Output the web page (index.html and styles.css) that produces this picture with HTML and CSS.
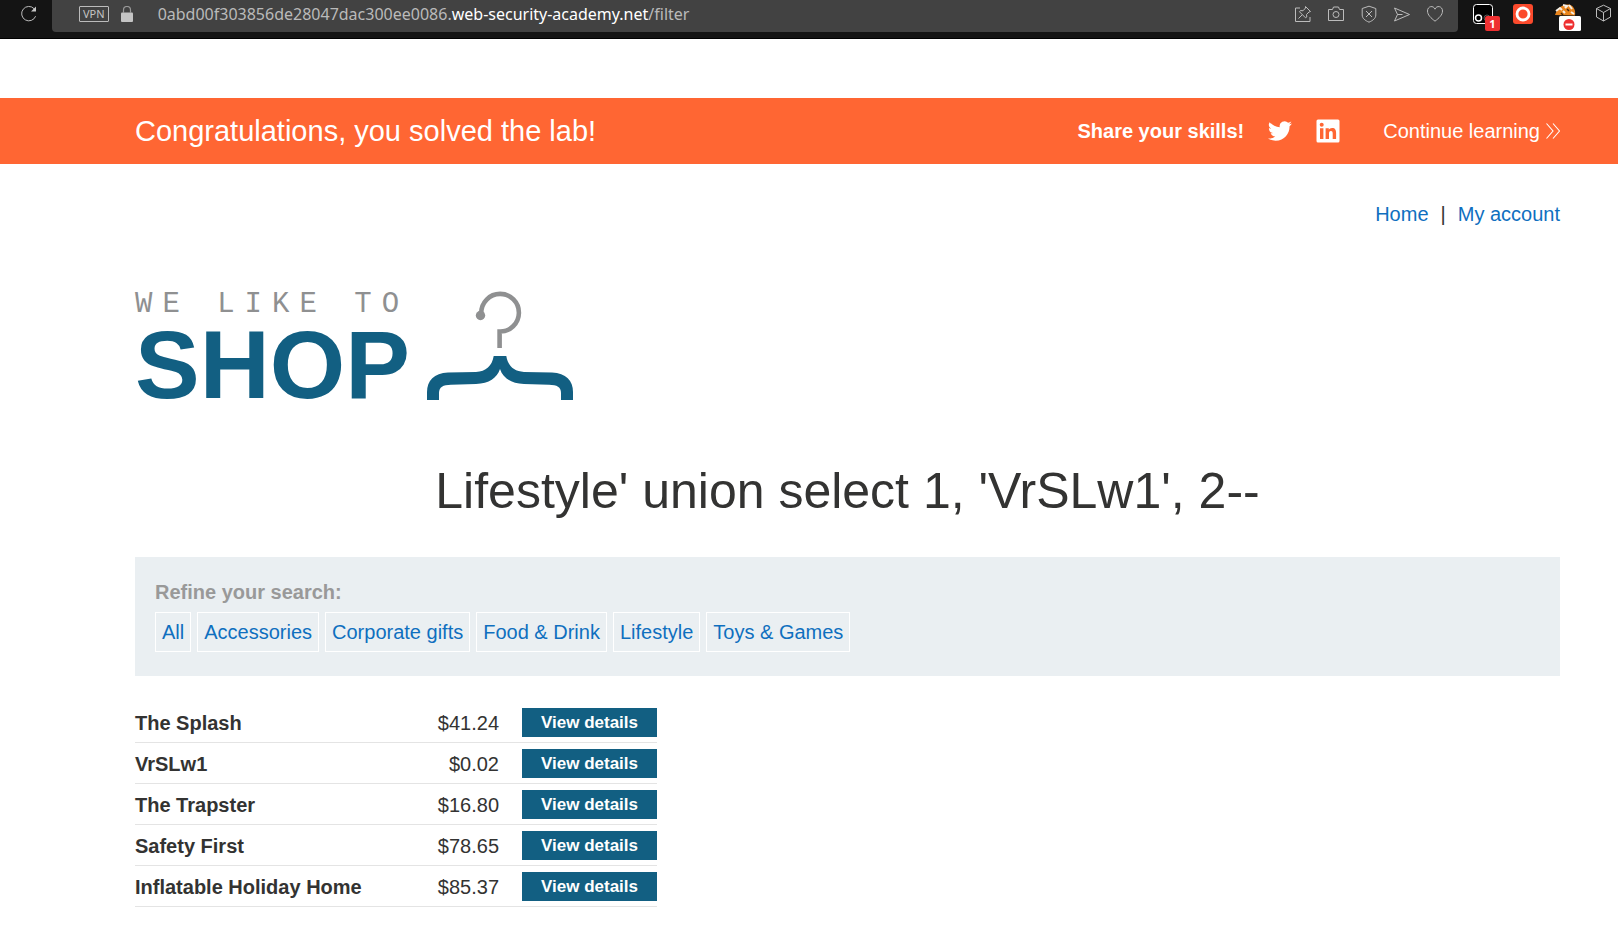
FILE: index.html
```html
<!DOCTYPE html>
<html lang="en">
<head>
<meta charset="utf-8">
<title>SQL injection lab</title>
<link rel="stylesheet" href="styles.css">
</head>
<body>
<div class="toolbar">
  <button class="tool reload" aria-label="Reload"><svg width="18" height="18" viewBox="0 0 18 18" fill="none" stroke="#c8c8c8" stroke-width="1.5"><path d="M15.6 11.2A7.2 7.2 0 1 1 14.2 3.8"/><path d="M16 1.4v5h-5z" fill="#c8c8c8" stroke="none"/></svg></button>
  <div class="address">
    <span class="vpn">VPN</span>
    <svg class="lock" width="12" height="16" viewBox="0 0 12 16"><rect y="6.500" width="12" height="9.500" rx="1" fill="#c4c4c4"/><path d="M2.500 7V4a3.500 3.500 0 0 1 7 0v3" fill="none" stroke="#999" stroke-width="1.200"/></svg>
    <span class="url">0abd00f303856de28047dac300ee0086.<span class="host">web-security-academy.net</span>/filter</span>
    <div class="actions">
      <button class="tool" aria-label="Pin"><svg width="18" height="18" viewBox="0 0 18 18"><path d="M6 3H1.500v13.500H16V12"/><path d="M11.500 1.500l5 5-1.500.5-2.500 2.500.3 2.500-1.300.8L5.500 6.800l1-1.300 2.500.3L11.500 3zM8.200 9.800L4.500 13.500"/></svg></button>
      <button class="tool" aria-label="Snapshot"><svg width="18" height="18" viewBox="0 0 18 18"><path d="M1.500 4.500h4l1-2.500h5l1 2.500h4v11h-15z"/><circle cx="9" cy="9.500" r="3"/></svg></button>
      <button class="tool" aria-label="Shield"><svg width="18" height="18" viewBox="0 0 18 18"><path d="M9 1.200L15.800 3.500V10c0 3.500-3 5.500-6.800 7.200C5.200 15.500 2.200 13.500 2.200 10V3.500zM6 6l6 6M12 6l-6 6"/></svg></button>
      <button class="tool" aria-label="Send"><svg width="18" height="18" viewBox="0 0 18 18"><path d="M1.500 3l15 6.500-15 6.500 3-6.500zM4.500 9.500h5"/></svg></button>
      <button class="tool" aria-label="Favourite"><svg width="18" height="18" viewBox="0 0 18 18"><path d="M9 16.200C5 13 1.500 10 1.500 6c0-5 6-6 7.500-1.800C10.500 0 16.500 1 16.500 6c0 4-3.500 7-7.500 10.200z"/></svg></button>
    </div>
  </div>
  <div class="extensions">
    <button class="tool" aria-label="Extension, 1 notice"><svg width="28" height="28" viewBox="0 0 28 28"><rect x="1.500" y=".5" width="19" height="19" rx="3" fill="#000" stroke="#fff"/><circle cx="6.500" cy="14" r="3" fill="none" stroke="#fff" stroke-width="1.500"/><circle cx="15" cy="14" r="3" fill="none" stroke="#555"/><rect x="13" y="12" width="15" height="15" rx="2" fill="#ee3031" stroke="none"/><text x="20.500" y="24" text-anchor="middle" class="badge">1</text></svg></button>
    <button class="tool" aria-label="Recorder"><svg width="28" height="20" viewBox="0 0 28 20"><rect width="20" height="20" rx="3" fill="#fb4a2c" stroke="none"/><circle cx="10" cy="10" r="6" fill="none" stroke="#fff" stroke-width="2.800"/></svg></button>
    <button class="tool" aria-label="Cookies"><svg width="28" height="28" viewBox="0 0 28 28"><path d="M1 11C3 4 9 0 15 .5c4 1 7 5 6 11z" fill="#e9851d" stroke="none"/><path d="M2 7l4-3 2 2M9 1l4 1-2 2M15 1l3 4M9 7l2 2M17 8l3 2" stroke="#f5efe6" stroke-width="2" fill="none"/><path d="M7 9l2 2M13 5l2 2" stroke="#4a2a10" stroke-width="1.500"/><rect x="5" y="12" width="22" height="15" rx="1.500" fill="#fff" stroke="none"/><circle cx="15" cy="20.500" r="5.500" fill="#ee3031" stroke="none"/><path d="M11.500 20.500h7" stroke="#fff" stroke-width="2"/></svg></button>
    <button class="tool" aria-label="Extensions"><svg width="18" height="18" viewBox="0 0 18 18"><path d="M8.500 1.200l7 3.300v8.500l-7 4-7-4V4.500zM1.500 4.500l7 4 7-4M8.500 8.500V17"/></svg></button>
  </div>
</div>

<section class="banner">
  <p class="banner-title">Congratulations, you solved the lab!</p>
  <span class="share">Share your skills!</span>
  <a class="social" href="#" aria-label="Twitter"><svg width="24" height="24" viewBox="0 0 24 24" fill="#fff"><path d="M23.950 4.570a10 10 0 0 1-2.820.770 4.960 4.960 0 0 0 2.160-2.720c-.950.550-2 .950-3.130 1.180a4.920 4.920 0 0 0-8.380 4.480C7.690 8.090 4.070 6.130 1.640 3.160a4.920 4.920 0 0 0 1.520 6.570 4.900 4.900 0 0 1-2.230-.610v.060a4.920 4.920 0 0 0 3.950 4.830 5 5 0 0 1-2.210.080 4.940 4.940 0 0 0 4.600 3.420A9.870 9.870 0 0 1 0 19.540a13.990 13.990 0 0 0 7.550 2.210c9.050 0 14-7.500 14-13.980 0-.210 0-.420-.020-.630a9.940 9.940 0 0 0 2.420-2.570z"/></svg></a>
  <a class="social" href="#" aria-label="LinkedIn"><svg width="24" height="24" viewBox="0 0 24 24"><rect x=".5" y=".5" width="23" height="23" rx="1.500" fill="#fff"/><path d="M4 9.300h3.400V20H4zM9.600 9.300h3.200v1.500c.6-1 1.700-1.800 3.300-1.800 3.200 0 4 2.100 4 5V20h-3.400v-5.300c0-1.400-.2-2.800-1.800-2.800s-1.900 1.300-1.900 2.700V20H9.600z" fill="#f63"/><circle cx="5.700" cy="5.800" r="2" fill="#f63"/></svg></a>
  <a class="continue" href="#">Continue learning<svg width="14" height="16" viewBox="0 0 14 16" fill="none" stroke="#fff" stroke-width="1.100"><path d="M.5.5L7 8 .5 15.500M7 .5L13.500 8 7 15.500"/></svg></a>
</section>

<main class="page">
  <nav class="account"><a href="#">Home</a><span>|</span><a href="#">My account</a></nav>
  <header class="logo">
    <div class="logo-words"><span class="tagline">WE LIKE TO</span><span class="brand">SHOP</span></div>
    <svg width="146" height="110" viewBox="427 291 146 110"><g fill="none" stroke="#8f9091" stroke-width="4.600"><path d="M481.300 314v-1A18.800 18.800 0 1 1 499.600 331.500V348"/></g><circle cx="480.500" cy="315.500" r="4.700" fill="#8f9091"/><path d="M493.700 356H506.300C508 366 514 371.500 524 372L552 372.600C566 373 573 381 573 392V400H561V393C561 387 557 384.800 549 384.700L524 384C511 383.500 503 378 500 369C497 378 489 383.500 476 384L451 384.700C443 384.800 439 387 439 393V400H427V392C427 381 434 373 448 372.600L476 372C486 371.500 492 366 493.700 356Z" fill="#125f82"/></svg>
  </header>
  <h1>Lifestyle' union select 1, 'VrSLw1', 2--</h1>
  <section class="filters">
    <p>Refine your search:</p>
    <div class="tags"><a href="#">All</a><a href="#">Accessories</a><a href="#">Corporate gifts</a><a href="#">Food &amp; Drink</a><a href="#">Lifestyle</a><a href="#">Toys &amp; Games</a></div>
  </section>
  <table class="products">
    <tr><th scope="row">The Splash</th><td>$41.24</td><td><a class="button" href="#">View details</a></td></tr>
    <tr><th scope="row">VrSLw1</th><td>$0.02</td><td><a class="button" href="#">View details</a></td></tr>
    <tr><th scope="row">The Trapster</th><td>$16.80</td><td><a class="button" href="#">View details</a></td></tr>
    <tr><th scope="row">Safety First</th><td>$78.65</td><td><a class="button" href="#">View details</a></td></tr>
    <tr><th scope="row">Inflatable Holiday Home</th><td>$85.37</td><td><a class="button" href="#">View details</a></td></tr>
  </table>
</main>
</body>
</html>
```
FILE: styles.css
```css
* { box-sizing: border-box; }
body {
  margin: 0;
  background: #fff;
  color: #333332;
  font: 20px/24px "Liberation Sans", Arial, sans-serif;
}
p, h1 { margin: 0; }
a { color: #0f6fbf; text-decoration: none; }
svg { display: block; flex: none; }

.toolbar {
  display: flex;
  align-items: flex-start;
  height: 39px;
  background: #141414;
  border-bottom: 1px solid #000;
}
.tool {
  display: block;
  padding: 0;
  border: 0;
  background: none;
}
.tool svg {
  fill: none;
  stroke: #bcbcbc;
  stroke-width: 1;
}
.reload { margin: 5px 14px 0 20px; }
.address {
  flex: 1;
  display: flex;
  align-items: center;
  height: 32px;
  padding: 0 14px 4px 27px;
  background: #424242;
  border-radius: 0 0 4px 4px;
}
.vpn {
  padding: 0 3px;
  border: 1px solid #bcbcbc;
  border-radius: 1px;
  color: #c4c4c4;
  font: 11px/14px "Noto Sans", sans-serif;
}
.lock { margin: 0 25px 0 12px; }
.url {
  flex: 1;
  color: #bababa;
  font: 16px/20px "Noto Sans", sans-serif;
}
.host { color: #fff; }
.actions { display: flex; gap: 15px; }
.extensions {
  display: flex;
  align-items: flex-start;
  gap: 13px;
  padding: 4px 5px 0 14px;
}
.badge {
  fill: #fff;
  stroke: none;
  font: bold 11px "Noto Sans", sans-serif;
}

.banner {
  display: flex;
  align-items: center;
  min-height: 66px;
  margin-top: 59px;
  padding: 0 58px 0 135px;
  background: #f63;
  color: #fff;
}
.banner-title { flex: 1; font-size: 29px; line-height: 32px; }
.share { font-weight: bold; margin-right: 24px; }
.social { margin-right: 24px; }
.continue {
  display: flex;
  align-items: center;
  gap: 6px;
  margin-left: 19px;
  color: #fff;
}

.page { padding: 38px 58px 24px 135px; }
.account { display: flex; justify-content: flex-end; gap: 12px; }
.logo {
  display: flex;
  align-items: flex-start;
  gap: 17px;
  margin-top: 65px;
}
.logo-words {
  display: flex;
  flex-direction: column;
  padding-top: 2px;
}
.tagline {
  color: #8f9091;
  font: 29px/24px "Liberation Mono", monospace;
  letter-spacing: 10px;
}
.brand {
  color: #125f82;
  font-size: 97px;
  font-weight: bold;
  line-height: 96px;
}
h1 {
  margin-top: 48px;
  font-size: 50px;
  font-weight: normal;
  line-height: 60px;
  text-align: center;
}
.filters {
  margin-top: 36px;
  padding: 23px 20px 24px;
  background: #eaeff2;
}
.filters p { color: #999; font-weight: bold; }
.tags { display: flex; flex-wrap: wrap; gap: 6px; margin-top: 8px; }
.tags a {
  padding: 7px 6px;
  border: 1px solid #fff;
}
.products {
  width: 522px;
  margin-top: 26px;
  border-collapse: collapse;
}
.products th, .products td {
  padding: 6px 0 5px;
  border-bottom: 1px solid #e4e4e4;
  text-align: right;
}
.products th { text-align: left; }
.products td:last-child { width: 158px; padding-left: 23px; }
.button {
  display: block;
  background: #125f82;
  color: #fff;
  font-size: 17px;
  font-weight: bold;
  line-height: 29px;
  text-align: center;
}
```
